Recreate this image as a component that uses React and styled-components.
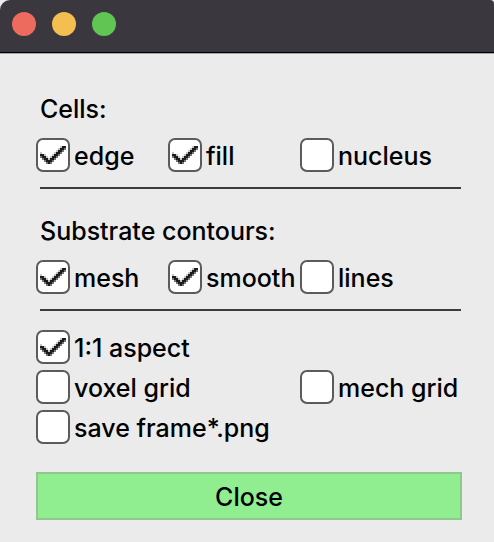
import React from "react";
import styled, { createGlobalStyle } from "styled-components";

const GlobalStyle = createGlobalStyle`
  *, *::before, *::after { box-sizing: border-box; }
  body {
    margin: 0;
    background: #ebebeb;
    color: #000;
    font-family: Inter, "Liberation Sans", sans-serif;
    font-size: 25px;
    font-weight: 500;
    line-height: 34px;
  }
`;

const Window = styled.div`
  min-height: 100vh;
  background: #ebebeb;
`;

const TitleBar = styled.header`
  display: flex;
  align-items: center;
  gap: 16px;
  height: 54px;
  padding: 0 12px 6px;
  background: #3a373f;
  border-bottom: 1px solid #a5a5a5;
  box-shadow: inset 0 -1px #000;
  border-radius: 10px 4px 0 0;
`;

const Light = styled.button`
  width: 24px;
  height: 24px;
  padding: 0;
  border: 0;
  border-radius: 50%;
  background: ${(p) => p.$color};
`;

const Content = styled.main`
  display: flex;
  flex-direction: column;
  padding: 38px 32px 22px 36px;
`;

const Group = styled.fieldset`
  min-width: 0;
  margin: 0;
  padding: 0;
  border: 0;
`;

const Heading = styled.legend`
  padding: 0 0 0 4px;
  margin-bottom: 12px;
`;

const Options = styled.div`
  display: grid;
  grid-template-columns: 132fr 132fr 162fr;
  row-gap: 6px;
`;

const Option = styled.label`
  display: flex;
  align-items: center;
  gap: 4px;
  min-width: 0;
  white-space: nowrap;
  grid-column: ${(p) => p.$column || "auto"};
`;

const OptionText = styled.span`
  padding-top: 2px;
  line-height: 32px;
`;

const Box = styled.span`
  display: grid;
  flex: none;
  width: 34px;
  height: 34px;

  > * { grid-area: 1 / 1; }
  svg { visibility: hidden; pointer-events: none; }
  input:checked + svg { visibility: visible; }
`;

const Input = styled.input`
  appearance: none;
  width: 34px;
  height: 34px;
  margin: 0;
  border: 2px solid #5b5b5b;
  border-radius: 7px;
  background: #fff;
`;

const Rule = styled.hr`
  width: calc(100% - 5px);
  height: 2px;
  margin: 15px 1px 25px 4px;
  border: 0;
  background: #3c3c3c;

  &:last-of-type { margin-bottom: 19px; }
`;

const CloseButton = styled.button`
  height: 48px;
  margin-top: 28px;
  padding: 2px 0 0;
  border: 2px solid #8fc78f;
  background: #90ee90;
  color: #000;
  font: inherit;
`;

function Tick() {
  return (
    <svg width="34" height="34" viewBox="0 0 17 17" shapeRendering="crispEdges" aria-hidden="true">
      <path
        fill="#c4c4c4"
        d="M2 7h1v1h-1zM4 8h1v1h-1zM5 9h1v1h-1zM6 10h1v1h-1zM7 9h1v1h-1zM8 8h1v1h-1zM9 7h1v1h-1zM10 6h1v1h-1zM11 5h1v1h-1zM12 4h1v1h-1z"
      />
      <path
        fill="#777"
        d="M2 9h1v1h-1zM3 10h1v1h-1zM4 11h1v1h-1zM5 12h1v1h-1zM7 12h1v1h-1zM8 11h1v1h-1zM9 10h1v1h-1zM10 9h1v1h-1zM11 8h1v1h-1zM12 7h1v1h-1zM13 6h1v1h-1zM14 5h1v1h-1z"
      />
      <path
        fill="#1c1c1c"
        d="M2 8h1v1h-1zM3 8h1v2h-1zM4 9h1v2h-1zM5 10h1v2h-1zM6 11h1v2h-1zM7 10h1v2h-1zM8 9h1v2h-1zM9 8h1v2h-1zM10 7h1v2h-1zM11 6h1v2h-1zM12 5h1v2h-1zM13 4h1v2h-1zM14 4h1v1h-1z"
      />
    </svg>
  );
}

function Check({ label, checked, column }) {
  return (
    <Option $column={column}>
      <Box>
        <Input type="checkbox" defaultChecked={checked} />
        <Tick />
      </Box>
      <OptionText>{label}</OptionText>
    </Option>
  );
}

export default function App() {
  return (
    <>
      <GlobalStyle />
      <Window>
        <TitleBar>
          <Light $color="#ed6a5e" aria-label="Close window" />
          <Light $color="#f5bf4f" aria-label="Minimize window" />
          <Light $color="#61c554" aria-label="Zoom window" />
        </TitleBar>
        <Content>
          <Group>
            <Heading>Cells:</Heading>
            <Options>
              <Check label="edge" checked />
              <Check label="fill" checked />
              <Check label="nucleus" />
            </Options>
          </Group>
          <Rule />
          <Group>
            <Heading>Substrate contours:</Heading>
            <Options>
              <Check label="mesh" checked />
              <Check label="smooth" checked />
              <Check label="lines" />
            </Options>
          </Group>
          <Rule />
          <Options>
            <Check label="1:1 aspect" checked column="1 / -1" />
            <Check label="voxel grid" column="1 / 3" />
            <Check label="mech grid" column="3" />
            <Check label="save frame*.png" column="1 / -1" />
          </Options>
          <CloseButton type="button">Close</CloseButton>
        </Content>
      </Window>
    </>
  );
}
